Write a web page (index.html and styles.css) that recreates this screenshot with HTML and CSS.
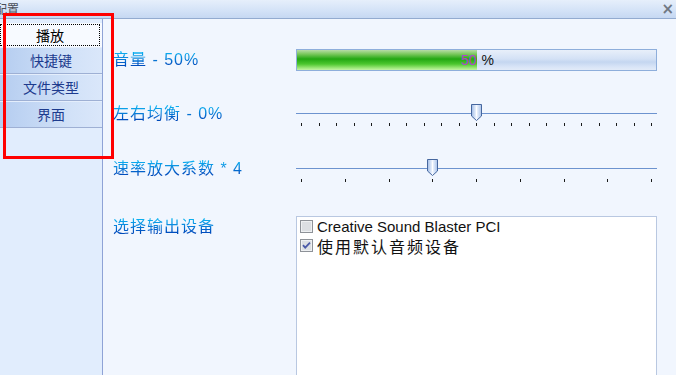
FILE: index.html
```html
<!DOCTYPE html>
<html lang="zh-CN">
<head>
    <meta charset="UTF-8">
    <title>配置</title>
    <link rel="stylesheet" href="styles.css">
</head>
<body>
    <div class="titlebar">
        <span class="title">配置</span>
        <span class="close">×</span>
    </div>

    <div class="window">
        <div class="sidebar">
            <div class="tab active"><span>播放</span></div>
            <div class="tab">快捷键</div>
            <div class="tab">文件类型</div>
            <div class="tab">界面</div>
        </div>

        <div class="content">
            <!-- volume -->
            <div class="row row-volume">
                <div class="label"><span>音量 - 50%</span></div>
                <div class="progress">
                    <div class="fill" style="width: 50%">50</div>
                    <div class="unit">%</div>
                </div>
            </div>

            <!-- balance -->
            <div class="row row-balance">
                <div class="label"><span>左右均衡 - 0%</span></div>
                <div class="slider" id="balance"></div>
            </div>

            <!-- speed -->
            <div class="row row-speed">
                <div class="label"><span>速率放大系数 * 4</span></div>
                <div class="slider" id="speed"></div>
            </div>

            <!-- output device -->
            <div class="row row-device">
                <div class="label"><span>选择输出设备</span></div>
                <div class="listbox">
                    <div class="item">
                        <svg class="check" width="13" height="13" viewBox="0 0 13 13">
                            <rect x="0.5" y="0.5" width="12" height="12" fill="#eef0f2" stroke="#8e9298"/>
                            <rect x="2" y="2" width="9" height="9" fill="#dcdfe3"/>
                        </svg>
                        <span class="latin">Creative Sound Blaster PCI</span>
                    </div>
                    <div class="item">
                        <svg class="check" width="13" height="13" viewBox="0 0 13 13">
                            <rect x="0.5" y="0.5" width="12" height="12" fill="#eef0f2" stroke="#8e9298"/>
                            <rect x="2" y="2" width="9" height="9" fill="#dcdfe3"/>
                            <path d="M3 6.2 L5.2 8.6 L10 3.6" fill="none" stroke="#4a5aa8" stroke-width="1.8"/>
                        </svg>
                        <span class="cjk">使用默认音频设备</span>
                    </div>
                </div>
            </div>
        </div>
    </div>

    <div class="mark"></div>

    <script>
        function buildSlider(id, ticks, value) {
            const el = document.getElementById(id);
            let html = '<div class="track"></div><div class="ticks">';
            for (let i = 0; i < ticks; i++) {
                html += '<i></i>';
            }
            html += '</div>';
            // thumb centre sits on the tick for the value
            const left = 5 + (350 / (ticks - 1)) * value - 5;
            html += `
                <svg class="thumb" style="left: ${left}px" width="11" height="17" viewBox="0 0 11 17">
                    <defs>
                        <linearGradient id="g-${id}" x1="0" x2="1" y1="0" y2="0">
                            <stop offset="0" stop-color="#9fbbe6"/>
                            <stop offset="0.5" stop-color="#f4f8ff"/>
                            <stop offset="1" stop-color="#a8c2ea"/>
                        </linearGradient>
                    </defs>
                    <path d="M0.5 0.5 H10.5 V12 L5.5 16.5 L0.5 12 Z" fill="url(#g-${id})" stroke="#46679f"/>
                    <line x1="5.5" y1="3" x2="5.5" y2="12" stroke="#ffffff"/>
                </svg>`;
            el.innerHTML = html;
        }

        buildSlider('balance', 21, 10);
        buildSlider('speed', 9, 3);
    </script>
</body>
</html>
```

FILE: styles.css
```css
/* General Styles */
body {
    margin: 0;
    padding: 0;
    width: 676px;
    height: 375px;
    overflow: hidden;
    position: relative;
    font-family: "Liberation Sans", "Noto Sans CJK SC", sans-serif;
    background-color: #f1f6fe;
}

.titlebar {
    height: 18px;
    border-bottom: 1px solid #93abd0;
    background: linear-gradient(#e6effb, #d3e2f7 60%, #c6d8f2);
    display: flex;
    align-items: center;
    justify-content: space-between;
    overflow: hidden;
}

.title {
    margin-left: -5px;
    font-family: "Noto Sans CJK SC", sans-serif;
    font-size: 12px;
    line-height: 14px;
    color: #4a4f58;
}

.close {
    margin-right: 2px;
    font-family: "DejaVu Sans", sans-serif;
    font-size: 15px;
    font-weight: bold;
    line-height: 14px;
    color: #707884;
}

.window {
    display: flex;
    height: 356px;
}

/* Sidebar tabs */
.sidebar {
    width: 103px;
    flex-shrink: 0;
    padding-top: 4px;
    background: #e1edfd;
    border-right: 1px solid #8fa3d6;
    box-sizing: border-box;
}

.tab {
    height: 26px;
    border-bottom: 1px solid #9eb0d4;
    display: flex;
    align-items: center;
    justify-content: center;
    font-family: "Noto Sans CJK SC", sans-serif;
    font-size: 14px;
    color: #1d3b8e;
    background: linear-gradient(to right, #b5cdf0, #d2e2f8 70%, #dae7fa);
    box-shadow: inset 0 1px 0 #e4eefc;
}

.tab.active {
    height: 23px;
    padding: 1px 2px 0 0;
    border-bottom: none;
    background: #f7faff;
    box-shadow: none;
    color: #000;
}

.tab.active span {
    flex: 1;
    align-self: stretch;
    display: flex;
    align-items: center;
    justify-content: center;
    border: 1px dotted #000;
    margin-bottom: 1px;
}

/* Content */
.content {
    flex: 1;
    padding-left: 10px;
}

.row {
    display: flex;
    align-items: flex-start;
}

.row-volume {
    margin-top: 30px;
    align-items: center;
}

.row-balance {
    margin-top: 31px;
}

.row-speed {
    margin-top: 29px;
}

.row-device {
    margin-top: 33px;
}

.label {
    width: 183px;
    flex-shrink: 0;
}

.label span {
    display: inline-block;
    font-family: "Liberation Sans", "Noto Sans CJK SC", sans-serif;
    font-size: 16px;
    line-height: 22px;
    letter-spacing: 1px;
    background: linear-gradient(#0cc6fa, #0a8ade 40%, #0052c2 70%, #0038a6);
    -webkit-background-clip: text;
    background-clip: text;
    color: transparent;
}

.row-balance .label span,
.row-speed .label span {
    margin-top: 1px;
}

/* Progress bar */
.progress {
    width: 361px;
    height: 22px;
    box-sizing: border-box;
    border: 1px solid #8eaedb;
    display: flex;
    background: linear-gradient(#e8effa, #d3e1f5 45%, #c4d6f0 60%, #d9e5f7 85%, #e2ebf8);
    font-size: 14px;
    line-height: 20px;
}

.fill {
    text-align: right;
    color: #b044d0;
    background: linear-gradient(#b7dca8, #7bc85e 20%, #23a712 45%, #4cc62e 70%, #9ee77a 90%, #c4f3a6);
}

.unit {
    padding-left: 5px;
    color: #111;
}

/* Sliders */
.slider {
    position: relative;
    width: 361px;
    height: 26px;
}

.track {
    margin-top: 11px;
    height: 1px;
    background: #6d93cf;
}

.ticks {
    display: flex;
    justify-content: space-between;
    padding: 0 5px;
    margin-top: 9px;
}

.ticks i {
    width: 1px;
    height: 3px;
    background: #1a1a1a;
}

#speed .ticks {
    margin-top: 10px;
}

.thumb {
    position: absolute;
    top: 2px;
}

/* Listbox */
.listbox {
    width: 361px;
    height: 170px;
    box-sizing: border-box;
    border: 1px solid #b9c8e1;
    background: #ffffff;
    padding: 0 3px;
}

.item {
    height: 19px;
    display: flex;
    align-items: center;
    gap: 4px;
    color: #111;
}

.item .latin {
    font-size: 15px;
}

.item .cjk {
    font-family: "Noto Sans CJK SC", sans-serif;
    font-size: 16px;
    letter-spacing: 2px;
}

/* red annotation frame over the tabs */
.mark {
    position: absolute;
    left: 3px;
    top: 13px;
    width: 111px;
    height: 146px;
    box-sizing: border-box;
    border: 3px solid #ff0000;
}
```
